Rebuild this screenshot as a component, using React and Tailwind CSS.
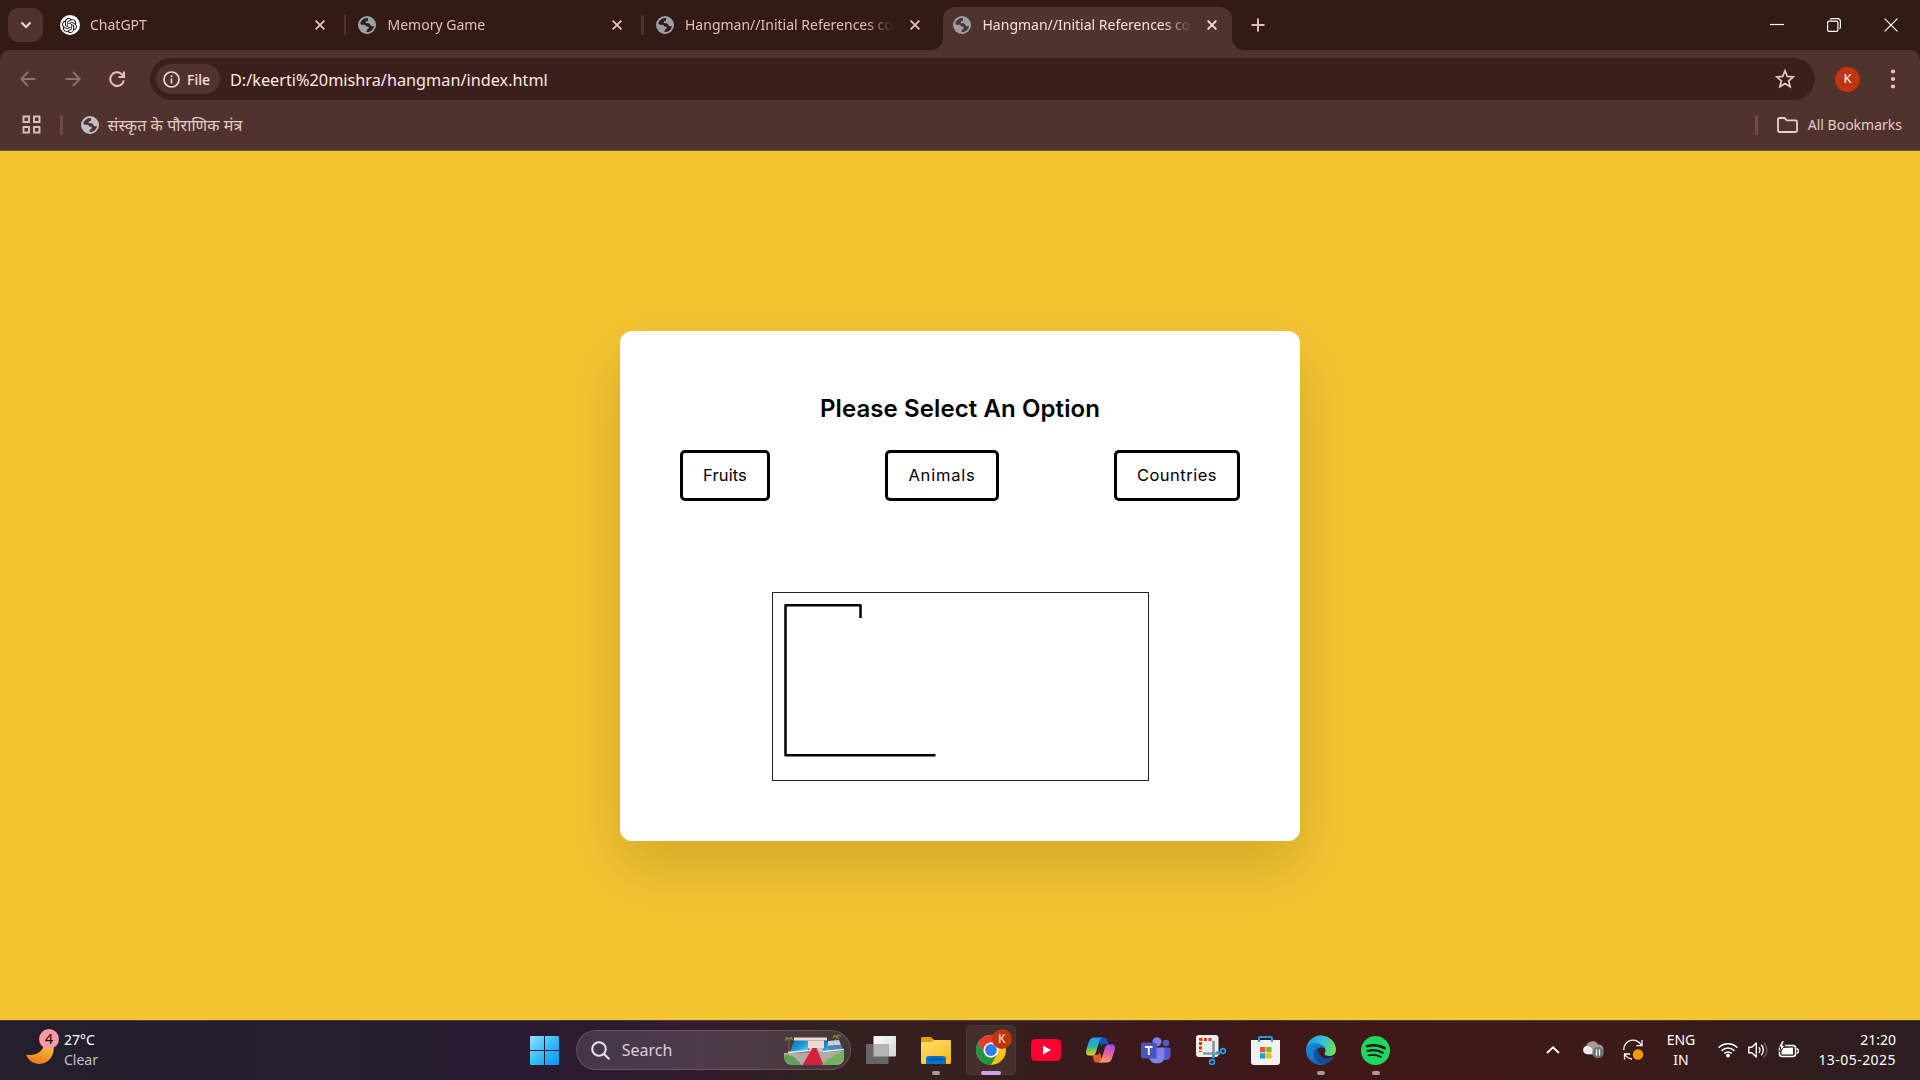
import React from "react";
import { SiOpenai } from "react-icons/si";

const UI = "font-['Noto_Sans','Open_Sans',sans-serif]";

function Globe({ color = "#9aa0a6", hole = "#321a15" }) {
  return (
    <svg width="18" height="18" viewBox="0 0 18 18" className="shrink-0">
      <circle cx="9" cy="9" r="9" fill={color} />
      <path
        d="M9.8 1.9C6.6 1.7 4 3.4 2.7 6c-.5 1.200-.2 2.500.9 2.700 1.300.2 2.500-.4 3.600.2.9.5.8 1.500 1.800 1.700 1.100.2 1.900.3 1.800 1.300-.1 1.100-1.500 1-2 2-.3.8-.1 1.500-.4 2.100 4.200.4 7.300-2.700 7.600-6.300-.9.7-2 .8-2.900.2-1-.7-.8-1.900-1.900-2.400-1-.5-2.500.1-3.300-.6-.8-.8.3-1.700 1.300-1.900 1.100-.2 1-1.400.6-3.100z"
        fill={hole}
      />
    </svg>
  );
}

function Cross({ color }) {
  return (
    <svg width="10" height="10" viewBox="0 0 10 10" className="shrink-0">
      <path d="M.6.6l8.800 8.800M9.400.6L.6 9.400" stroke={color} strokeWidth="1.900" />
    </svg>
  );
}

function Tab({ title, gpt, active, separator }) {
  return (
    <div className="relative flex h-full w-[297.5px] shrink-0 items-center">
      {active && (
        <div className="absolute inset-y-0 left-[4.5px] mt-[7px] w-[289px] rounded-t-[12px] bg-[#51332e]">
          <svg className="absolute bottom-0 -left-3" width="12" height="12"><path d="M12 0A12 12 0 0 1 0 12H12Z" fill="#51332e" /></svg>
          <svg className="absolute bottom-0 -right-3" width="12" height="12"><path d="M0 0A12 12 0 0 0 12 12H0Z" fill="#51332e" /></svg>
        </div>
      )}
      <div className={separator ? "h-5 w-[2.5px] rounded bg-[#51332e]" : "h-5 w-[2.5px]"} />
      <div className="relative ml-[11px] flex size-5 items-center justify-center">
        {gpt ? (
          <div className="flex size-5 items-center justify-center rounded-full bg-white">
            <SiOpenai size={15} color="#111" />
          </div>
        ) : (
          <Globe hole={active ? "#51332e" : "#321a15"} />
        )}
      </div>
      <div
        className={
          "relative ml-[10.5px] w-[213px] overflow-hidden whitespace-nowrap text-[14px] leading-5 [mask-image:linear-gradient(to_right,black_85%,transparent_98%)] " +
          (active ? "text-[#f5dedb]" : "text-[#e7bdb6]")
        }
      >
        {title}
      </div>
      <div className="relative ml-[11.5px] flex">
        <Cross color={active ? "#f5dedb" : "#e7bdb6"} />
      </div>
    </div>
  );
}

function TabStrip() {
  return (
    <div className="flex h-[50px] items-center bg-[#321a15]">
      <div className="ml-2 flex h-[34px] w-[35px] items-center justify-center rounded-[11px] bg-[#51332e]">
        <svg width="12" height="8" viewBox="0 0 12 8"><path d="M1.500 1.500L6 6l4.500-4.500" fill="none" stroke="#f5dedb" strokeWidth="2" /></svg>
      </div>
      <div className="ml-[3px] flex h-full">
        <Tab title="ChatGPT" gpt />
        <Tab title="Memory Game" separator />
        <Tab title="Hangman//Initial References co" separator />
        <Tab title="Hangman//Initial References co" active />
      </div>
      <svg width="14" height="14" viewBox="0 0 14 14" className="ml-[15px]"><path d="M7 .5v13M.5 7h13" stroke="#e7bdb6" strokeWidth="2" /></svg>
      <div className="ml-auto flex items-center gap-[43px] pr-[22px] pb-px">
        <svg width="14" height="14"><path d="M0 6.500h14" stroke="#fff" strokeWidth="1.200" /></svg>
        <svg width="14" height="14" viewBox="0 0 14 14" fill="none" stroke="#fff" strokeWidth="1.200">
          <rect x=".6" y="3.100" width="10.300" height="10.300" rx="1.500" />
          <path d="M3.200 1.500Q3.500.6 5 .6h5.500q2.900 0 2.900 2.900V9q0 1.500-1 1.800" />
        </svg>
        <svg width="14" height="14" viewBox="0 0 14 14"><path d="M.6.6l12.800 12.800M13.400.6L.6 13.400" stroke="#fff" strokeWidth="1.200" /></svg>
      </div>
    </div>
  );
}

function Toolbar() {
  return (
    <div className="bg-[#321a15]">
      <div className="rounded-t-[10px] bg-[#51332e]">
        <div className="flex h-[58px] items-center">
          <svg width="16" height="16" viewBox="0 0 16 16" className="ml-5 shrink-0" fill="none" stroke="#90706a" strokeWidth="1.800"><path d="M15.500 8H1.500M8 1L1.200 8 8 15" /></svg>
          <svg width="16" height="16" viewBox="0 0 16 16" className="ml-[28.500px] shrink-0" fill="none" stroke="#90706a" strokeWidth="1.800"><path d="M.5 8h14M8 1l6.800 7L8 15" /></svg>
          <svg width="16" height="16" viewBox="0 0 16 16" className="ml-[28.500px] shrink-0" fill="none" stroke="#f0bfb8" strokeWidth="2"><path d="M14.800 9.300A6.800 6.800 0 1 1 12.800 3.200L15 5.500M15 .5v5.500H9.500" /></svg>
          <div className="ml-[25px] flex h-[42px] w-[1665px] items-center rounded-full bg-[#3b1f1b] pl-[6px]">
            <div className="flex h-[30px] w-[64px] items-center rounded-full bg-[#51332e] pl-[7px] text-[14px] font-medium text-[#f8e3df]">
              <svg width="17" height="17" viewBox="0 0 17 17" fill="none" stroke="#f0d5d0" strokeWidth="1.700" className="mr-[7px]"><circle cx="8.500" cy="8.500" r="7.500" /><path d="M8.500 7.500v5M8.500 4.300v1.800" /></svg>
              File
            </div>
            <div className="ml-[10px] pt-px text-[16.25px] leading-6 text-[#fbe9e6]">D:/keerti%20mishra/hangman/index.html</div>
            <svg width="20" height="20" viewBox="0 0 20 20" className="mr-[20px] ml-auto" fill="none" stroke="#e3cac5" strokeWidth="1.700"><path d="M10 1.800l2.300 5.600 6 .5-4.600 3.900 1.400 5.900L10 14.600l-5.100 3.100 1.400-5.900L1.700 7.900l6-.5z" strokeLinejoin="miter" /></svg>
          </div>
          <div className="ml-[20px] flex size-[25px] items-center justify-center rounded-full bg-[#bf360c] text-[13px] text-white">K</div>
          <svg width="6" height="20" viewBox="0 0 6 20" className="ml-[30px]" fill="#f0bfb8"><circle cx="3" cy="2.500" r="2.100" /><circle cx="3" cy="10" r="2.100" /><circle cx="3" cy="17.500" r="2.100" /></svg>
        </div>
        <div className="flex h-[43px] items-center border-b border-[#6b524d] pb-[9px] text-[14px] text-[#e3cac5]">
          <svg width="19" height="19" viewBox="0 0 19 19" className="ml-[22px] shrink-0" fill="none" stroke="#d8bfba" strokeWidth="1.900"><path d="M1.500 1.500h5.500V7H1.500zM12 1.500h5.500V7H12zM1.500 12h5.500v5.500H1.500zM12 12h5.500v5.500H12z" /></svg>
          <div className="mr-[18.500px] ml-[19px] h-5 w-[2.500px] rounded bg-[#6f4c46]" />
          <Globe color="#bdc1c6" hole="#51332e" />
          <div className="ml-[8.500px] text-[16px] leading-6 tracking-[0.1px]">संस्कृत के पौराणिक मंत्र</div>
          <div className="ml-auto h-5 w-[2.500px] rounded bg-[#6f4c46]" />
          <svg width="21" height="16" viewBox="0 0 21 16" className="ml-[19px]" fill="none" stroke="#e8cfca" strokeWidth="1.800"><path d="M1 2.500Q1 1 2.500 1h5l2.300 2.300h8.700Q20 3.300 20 4.800v8.700q0 1.500-1.500 1.500h-16Q1 15 1 13.500z" /></svg>
          <div className="mr-[18px] ml-[10px] whitespace-nowrap">All Bookmarks</div>
        </div>
      </div>
    </div>
  );
}

function Game() {
  const button = "flex h-[51px] items-center justify-center rounded-[5px] border-[3px] border-black text-[16.500px]";
  return (
    <div className="flex h-[869px] items-center justify-center bg-[#f4c531]">
      <div className="flex h-[510px] w-[680px] flex-col items-center rounded-[12px] bg-white px-[60px] pt-[59px] font-['Inter',sans-serif] text-black shadow-[0_25px_62px_rgba(0,0,0,0.15)]">
        <div className="text-[24px] leading-[38px] font-semibold tracking-[0.1px]">Please Select An Option</div>
        <div className="mt-[22px] flex w-full justify-between">
          <div className={button + " w-[90px] tracking-[0.1px]"}>Fruits</div>
          <div className={button + " w-[114px] tracking-[0.8px]"}>Animals</div>
          <div className={button + " w-[126px] tracking-[0.5px]"}>Countries</div>
        </div>
        <div className="mt-[91px] h-[189px] w-[377px] border border-[#222]">
          <svg width="375" height="187" viewBox="0 0 375 187" fill="none" stroke="#000" strokeWidth="2.500">
            <path d="M162.500 162.300H12.500V12.300H87.500V25" strokeLinejoin="round" />
          </svg>
        </div>
      </div>
    </div>
  );
}

function Chrome() {
  return (
    <div className="relative flex size-[50px] items-center justify-center rounded-[5px] border border-white/5 bg-white/[0.07]">
      <svg width="30" height="30" viewBox="0 0 30 30">
        <circle cx="15" cy="15" r="15" fill="#fbc116" />
        <path d="M2 7.500A15 15 0 0 1 28 7.500H15L8.500 18.700z" fill="#e33b2e" />
        <path d="M2 7.500A15 15 0 0 0 15 30L21.500 18.700A7.500 7.500 0 0 1 8.500 18.700z" fill="#229342" />
        <circle cx="15" cy="15" r="7.500" fill="#fff" />
        <circle cx="15" cy="15" r="5.900" fill="#2f7df0" />
      </svg>
      <div className="absolute top-[3px] right-[3px] flex size-5 items-center justify-center rounded-full bg-[#bf360c] text-[12px] font-medium text-[#f2d5cb]">K</div>
    </div>
  );
}

function TaskView() {
  return (
    <svg width="30" height="28" viewBox="0 0 30 28">
      <defs><linearGradient id="tv" x1="0" y1="0" x2="1" y2="1"><stop stopColor="#fff" /><stop offset="1" stopColor="#d4d4d4" /></linearGradient></defs>
      <rect x="7.500" width="22.500" height="20.500" rx="1" fill="url(#tv)" />
      <rect y="8" width="22.500" height="20" rx="1" fill="#666" />
      <rect x="7.500" y="8" width="15" height="12.500" fill="#b5b5b5" />
    </svg>
  );
}

function Explorer() {
  return (
    <svg width="30" height="27" viewBox="0 0 30 27">
      <defs><linearGradient id="ex" x1="0" y1="0" x2="1" y2="1"><stop stopColor="#ffdf75" /><stop offset="1" stopColor="#fdb913" /></linearGradient></defs>
      <path d="M0 1.500Q0 0 1.500 0H9q1.500 0 2.500 1.200L13 3H28.500Q30 3 30 5v8H0z" fill="#e3a007" />
      <path d="M0 6Q0 5 1.500 5H9.500q1.500 0 2.500-1l1-1H29q1 0 1 1v21.500q0 1.500-1.500 1.500h-27Q0 27 0 25.500z" fill="url(#ex)" />
      <path d="M5 27v-5q0-3 3-3h14q3 0 3 3v5z" fill="#0b72c9" />
      <path d="M9 22.500h12.500" stroke="#0a4d8f" strokeWidth="1.300" strokeLinecap="round" />
    </svg>
  );
}

function YouTube() {
  return (
    <svg width="30" height="22" viewBox="0 0 30 22"><rect width="30" height="22" rx="4.500" fill="#ff0033" /><path d="M12 6.500v9l8-4.500z" fill="#fff" /></svg>
  );
}

function Copilot() {
  return (
    <svg width="29" height="26" viewBox="0 0 29 26">
      <defs>
        <linearGradient id="c1" x1="0" y1="0" x2="0" y2="1"><stop stopColor="#1b9ef0" /><stop offset=".5" stopColor="#2bb5b0" /><stop offset=".75" stopColor="#8fc749" /><stop offset="1" stopColor="#f3c52c" /></linearGradient>
        <linearGradient id="c2" x1=".6" y1="0" x2=".3" y2="1"><stop stopColor="#a44cf0" /><stop offset=".5" stopColor="#ec5f9b" /><stop offset="1" stopColor="#ffa25a" /></linearGradient>
      </defs>
      <path d="M12 .5h6.500q2 0 2.800 2.500L22.500 7h-4q-2.500 0-3.300 3z" fill="#1652c9" />
      <path d="M17 25.500h-6.500q-2 0-2.800-2.500L6.500 18h4q2.500 0 3.300-3z" fill="#e8592b" />
      <path d="M8.500.5H17q-2.500 0-3.500 3.500l-3.500 11q-1 3.500-3.500 3.500H3Q-.8 18.500.3 13L3 4.500Q4.300.5 8.500.5z" fill="url(#c1)" />
      <path d="M20.500 25.500H12q2.500 0 3.500-3.500l3.500-11q1-3.500 3.500-3.500H26q3.800 0 2.700 5.500L26 21.500q-1.300 4-5.500 4z" fill="url(#c2)" />
    </svg>
  );
}

function Teams() {
  return (
    <svg width="30" height="27" viewBox="0 0 30 27">
      <circle cx="25" cy="6" r="3.300" fill="#5059c9" />
      <path d="M20 10.500h8q1.500 0 1.500 1.500v6q0 5-4.500 5h-5z" fill="#5059c9" />
      <circle cx="16" cy="4.800" r="4.500" fill="#7b83eb" />
      <path d="M8 10.500h14q1.500 0 1.500 1.500v7q0 7.500-7.500 7.500T8 19z" fill="#7b83eb" />
      <rect y="5.500" width="15.500" height="16" rx="1.500" fill="#4b53bc" />
      <path d="M4 10h7.500M7.750 10v8" stroke="#fff" strokeWidth="1.800" />
    </svg>
  );
}

function Snip() {
  return (
    <svg width="30" height="30" viewBox="0 0 30 30">
      <rect width="22.500" height="22" rx="3" fill="#eceff1" />
      <path d="M15.500 4.500H4.500V17" fill="none" stroke="#d83b01" strokeWidth="3" strokeDasharray="3 1.500" />
      <path d="M17.500 6v17M7 18.500h17" stroke="#8d979e" strokeWidth="2.700" />
      <path d="M17.500 19.500v4M20 17.500h4" stroke="#1a8fdb" strokeWidth="2" />
      <circle cx="16" cy="27" r="2.400" fill="none" stroke="#1f9fe8" strokeWidth="1.700" />
      <circle cx="27" cy="16" r="2.400" fill="none" stroke="#1f9fe8" strokeWidth="1.700" />
    </svg>
  );
}

function Store() {
  return (
    <svg width="29" height="30" viewBox="0 0 29 30">
      <path d="M0 5h29v22q0 3-3 3H3q-3 0-3-3z" fill="#f1f1f1" />
      <path d="M8 7V3.200Q8 2 9.200 2h10.600Q21 2 21 3.200V7" fill="none" stroke="#1b9de2" strokeWidth="2" />
      <path d="M9 12h5.300v5.300H9z" fill="#f25022" /><path d="M15.200 12h5.300v5.300h-5.300z" fill="#7fba00" />
      <path d="M9 18.200h5.300v5.300H9z" fill="#00a4ef" /><path d="M15.200 18.200h5.300v5.300h-5.300z" fill="#ffb900" />
    </svg>
  );
}

function Edge() {
  return (
    <svg width="30" height="30" viewBox="0 0 30 30">
      <defs>
        <linearGradient id="e1" x1="0" y1=".3" x2="1" y2=".5"><stop stopColor="#1f9fe0" /><stop offset=".55" stopColor="#35c1d6" /><stop offset="1" stopColor="#6fe04d" /></linearGradient>
        <linearGradient id="e2" x1="0" y1="0" x2="1" y2="1"><stop stopColor="#1b8de0" /><stop offset="1" stopColor="#0f5fb8" /></linearGradient>
      </defs>
      <path d="M.3 12.500A15 15 0 0 1 30 14.500c0 4.300-3 6.500-6.500 6.500-3 0-5-1-5-2.300 0-.8 1-1.200 1-3.200 0-3-2.500-5.500-6-5.500C8 8.500 3 10 .3 12.500z" fill="url(#e1)" />
      <path d="M0 15.500C0 11 4 8 9 8c4.500 0 8.500 2.500 9.500 5.500-2-1.500-4.500-1.500-6.500.5-3 3-2 9 2 12.500 1.500 1.500 3 2.500 5 2.900A15 15 0 0 1 0 15.500z" fill="url(#e2)" />
      <path d="M8 19c0-3 1.500-6 4.500-7.300-1.500 4 .5 9.800 6.500 11.300 3.500.8 6.500-.3 8-1.200.7-.3 1 .2.600.8-3 5-9 7.300-13 6.400C10.500 27.500 8 23 8 19z" fill="#124e9a" />
    </svg>
  );
}

function Spotify() {
  return (
    <svg width="29" height="29" viewBox="0 0 29 29" fill="none" stroke="#0c1a10" strokeLinecap="round">
      <circle cx="14.500" cy="14.500" r="14.500" fill="#1ed760" stroke="none" />
      <path d="M6 10.200c6-1.600 12.500-1 17.500 1.800" strokeWidth="2.700" />
      <path d="M6.800 15c5-1.400 10.500-.8 14.800 1.700" strokeWidth="2.300" />
      <path d="M7.500 19.400c4.200-1 8.600-.6 12.300 1.500" strokeWidth="1.900" />
    </svg>
  );
}

function Villa() {
  return (
    <svg width="62" height="32" viewBox="0 0 62 32" className="ml-auto">
      <defs><linearGradient id="vg" x1="0" y1="0" x2="1" y2="1"><stop stopColor="#0b62a8" /><stop offset=".6" stopColor="#22a5dc" /><stop offset="1" stopColor="#8fe0ee" /></linearGradient></defs>
      <path d="M1 19l60-2v6q0 8-8 8H10q-8 0-9-8z" fill="#b5aaa2" />
      <path d="M6 19V6M53 10V3" stroke="#7a5a2a" strokeWidth="1.200" />
      <path d="M2.500 6.500Q4 3.500 6 5q2-1.500 4 1M2.500 3.500L6 5l3-2M50 4q1.500-3 3.500-1.500Q56-.5 58 3M51 1l2.500 1.500L56 5" stroke="#7f9130" strokeWidth="1.300" fill="none" />
      <path d="M11 6h14v11l-18 2z" fill="url(#vg)" />
      <path d="M41 7l5 1v11l-6-1z" fill="url(#vg)" />
      <path d="M11 3.500h33v3H11z" fill="#ecd9d5" />
      <path d="M25 6.500h16v8H25z" fill="#f1d9d0" /><path d="M26 14h14v4H26z" fill="#b9c4d6" />
      <path d="M45 7l11-1 2 5-13 1z" fill="#c3cfe6" />
      <path d="M45 12l13-1 2 5-15 1z" fill="#4b86b8" />
      <path d="M5 18.500l21-2M40 17.500l21-2" stroke="#e3edf5" strokeWidth="1.600" />
      <path d="M29.500 14h4l7 17H19.500z" fill="#d4213c" />
      <path d="M1 22q3-3 6 0 5 0 6 4 4 1 5 5H9q-8-3-8-9z" fill="#5da254" />
      <path d="M61 18q-3-1-5 2-6 0-7 4-5 0-6 4-4 0-4 3h14q8-3 8-13z" fill="#6fb35c" />
    </svg>
  );
}

const apps = [
  { icon: <TaskView /> },
  { icon: <Explorer />, mark: "idle" },
  { icon: <Chrome />, mark: "active" },
  { icon: <YouTube /> },
  { icon: <Copilot /> },
  { icon: <Teams /> },
  { icon: <Snip /> },
  { icon: <Store /> },
  { icon: <Edge />, mark: "idle" },
  { icon: <Spotify />, mark: "idle" },
];

function Taskbar() {
  return (
    <div className="grid h-[60px] grid-cols-[1fr_886.5px_1fr] border-t border-[#4a4240] bg-[linear-gradient(to_right,#231f2d_0,#241e2e_18%,#281a31_27%,#331c2e_36%,#33211f_43%,#35201f_52%,#3d181c_60%,#401916_73%,#3d1b18_84%,#301c1d_93%,#2e1d20_100%)] pb-px text-[14px]">
      <div className="flex items-center pb-px pl-[26px]">
        <div className="relative h-[30px] w-[38px]">
          <svg width="28" height="20" viewBox="0 0 28 20" className="absolute bottom-0 left-0">
            <defs><linearGradient id="mn" x1="1" y1="0" x2=".5" y2="1"><stop stopColor="#f5c83a" /><stop offset="1" stopColor="#f07a1c" /></linearGradient></defs>
            <path d="M0 9.500c8 2 17-2 17.500-9.500H27c3 9-4 19-13.500 19C7 19 2 15 0 9.500z" fill="url(#mn)" />
          </svg>
          <div className="absolute -top-[6px] left-[13px] flex size-5 items-center justify-center rounded-full bg-[#ff9aa5] text-[14px] text-black">4</div>
        </div>
        <div className="leading-5 text-white">
          <div>27°C</div>
          <div className="text-[#c4bfc6]">Clear</div>
        </div>
      </div>

      <div className="flex items-center">
        <div className="flex w-[55px] justify-center">
          <svg width="29" height="29" viewBox="0 0 29 29">
            <defs><linearGradient id="wn" x1="0" y1="0" x2="29" y2="29" gradientUnits="userSpaceOnUse"><stop stopColor="#8fe2fc" /><stop offset=".5" stopColor="#35bdf9" /><stop offset="1" stopColor="#0d93f7" /></linearGradient></defs>
            <path d="M1 0h13v14H0V1Q0 0 1 0zM15 0h13q1 0 1 1v13H15zM0 15h14v14H1q-1 0-1-1zM15 15h14v13q0 1-1 1H15z" fill="url(#wn)" />
          </svg>
        </div>
        <div className="ml-[4px] flex h-[40px] w-[275px] items-center rounded-full border border-white/15 bg-[linear-gradient(to_right,#44364a,#4e3b4b_45%,#4c3a42_70%,#443639)] pr-[5px] pl-[14px]">
          <svg width="19" height="19" viewBox="0 0 19 19" fill="none" stroke="#e9e4ea" strokeWidth="2"><circle cx="8" cy="8" r="6.800" /><path d="M12.800 12.800l5 5" strokeLinecap="round" /></svg>
          <div className="ml-[12px] text-[16px] text-[#d8d0d8]">Search</div>
          <Villa />
        </div>
        <div className="ml-[2.500px] flex">
          {apps.map(({ icon, mark }, i) => (
            <div key={i} className="relative flex h-[58px] w-[55px] items-center justify-center">
              {icon}
              {mark === "idle" && <div className="absolute bottom-[4.500px] h-[4px] w-[8px] rounded-full bg-[#a99a9a]" />}
              {mark === "active" && <div className="absolute bottom-[4.500px] h-[4px] w-5 rounded-full bg-[#d8a0e0]" />}
            </div>
          ))}
        </div>
      </div>

      <div className="flex items-center justify-end pr-[24px] pb-px text-white">
        <svg width="14" height="8" viewBox="0 0 14 8" fill="none" stroke="#fff" strokeWidth="1.800"><path d="M1 7l6-5.700L13 7" /></svg>
        <svg width="21" height="19" viewBox="0 0 21 19" className="ml-[23px]">
          <path d="M4 14.500a4 4 0 0 1-1-7.500A6.500 6.500 0 0 1 15 4.500 5 5 0 0 1 16 14.500z" fill="#a99a9a" />
          <path d="M4 14a4 4 0 0 1 .3-8Q9 6 12 14z" fill="#f1ebeb" />
          <circle cx="15" cy="12.500" r="5.700" fill="#6f7677" />
          <path d="M13.500 9.500v6M16.500 9.500v6" stroke="#fff" strokeWidth="1.200" />
        </svg>
        <svg width="21" height="21" viewBox="0 0 21 21" className="ml-[19px]" fill="none" stroke="#fff" strokeWidth="1.300">
          <path d="M.8 11A9.300 9.300 0 0 1 18.500 6.500M19 1v5.700h-5.700M9 20A9.300 9.300 0 0 1 2 15.500M1.500 20.500V15h5.700" />
          <circle cx="15" cy="15.500" r="5.200" fill="#ff9800" stroke="none" />
        </svg>
        <div className="ml-[22px] w-[30px] text-center leading-5">
          <div>ENG</div>
          <div>IN</div>
        </div>
        <svg width="20" height="16" viewBox="0 0 20 16" className="ml-[22px]" fill="none" stroke="#fff" strokeWidth="1.500">
          <path d="M.7 5.700a13 13 0 0 1 18.600 0M3.500 8.700a9 9 0 0 1 13 0M6.300 11.500a5.200 5.200 0 0 1 7.400 0" />
          <circle cx="10" cy="13.500" r="1.900" fill="#fff" stroke="none" />
        </svg>
        <svg width="20" height="18" viewBox="0 0 20 18" className="ml-[10px]" fill="none" stroke="#fff" strokeWidth="1.400">
          <path d="M.8 6.200h3L8.300 2v14L3.800 11.800h-3z" strokeLinejoin="round" />
          <path d="M10.800 6.200a4 4 0 0 1 0 5.600M13.200 3.800a7.400 7.400 0 0 1 0 10.400" />
          <path d="M15.700 1.500a10.600 10.600 0 0 1 0 15" stroke="#6e5b5c" />
        </svg>
        <svg width="21" height="18" viewBox="0 0 21 18" className="ml-[10px]">
          <rect x="1.500" y="4.500" width="16" height="11" rx="2.500" fill="none" stroke="#fff" strokeWidth="1.500" />
          <path d="M5 7l10-.5v7H3.500V10z" fill="#fff" />
          <path d="M18.500 8h.8q.9 0 .9.900v2.200q0 .9-.9.900h-.8" stroke="#fff" strokeWidth="1.300" fill="none" />
          <path d="M4-.5L.5 6h2.300L1.800 11 7 4.500H4.600L6.500-.5z" fill="#fff" stroke="#301c1d" strokeWidth="1" />
        </svg>
        <div className="ml-[19px] flex w-[78px] flex-col items-end leading-5 whitespace-nowrap">
          <div>21:20</div>
          <div className="tracking-[0.45px]">13-05-2025</div>
        </div>
      </div>
    </div>
  );
}

export default function App() {
  return (
    <div className={"flex h-[1080px] w-[1920px] flex-col overflow-hidden " + UI}>
      <TabStrip />
      <Toolbar />
      <Game />
      <Taskbar />
    </div>
  );
}
